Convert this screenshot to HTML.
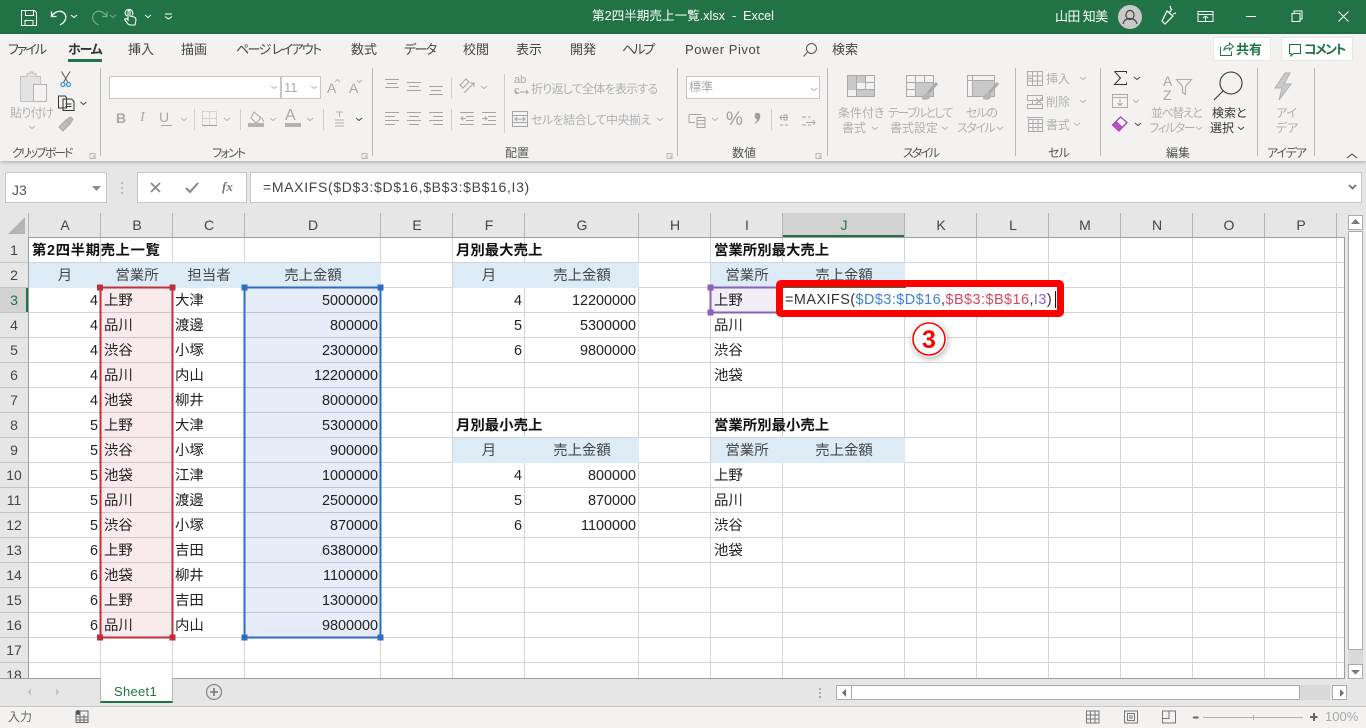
<!DOCTYPE html>
<html lang="ja"><head><meta charset="utf-8"><title>第2四半期売上一覧.xlsx - Excel</title>
<style>
html,body{margin:0;padding:0;width:1366px;height:728px;overflow:hidden;background:#e6e6e6}
body{position:relative;font-family:"Liberation Sans","Noto Sans CJK JP",sans-serif}
div,span.a{box-sizing:border-box}
.a{position:absolute}
.t{position:absolute;white-space:nowrap;font-feature-settings:"palt";line-height:16px}
.tab{font-size:13px;color:#444;top:42px}
.g{font-size:12px;color:#b1b1b1}
.lab{font-size:12px;color:#555;top:145px}
.col{position:absolute;font-size:14.4px;line-height:25px;color:#222;white-space:nowrap;margin-top:1px}
.r{text-align:right}
.hd{position:absolute;font-size:14.4px;line-height:25px;color:#444;text-align:center;white-space:nowrap;margin-top:1px}
.b{position:absolute;font-size:14.4px;line-height:25px;font-weight:bold;color:#111;white-space:nowrap;margin-top:1px}
.ch{position:absolute;font-size:14px;color:#444;text-align:center;top:213px;line-height:24px}
svg{position:absolute;overflow:visible}
</style></head><body>

<div class="a" style="left:0;top:0;width:1366px;height:34px;background:#217346"></div>
<div class="a" style="left:0;top:34px;width:1366px;height:127px;background:#f3f2f1;box-shadow:0 1px 4px rgba(0,0,0,.28)"></div>

<div class="t" style="left:592px;top:8px;font-size:12.6px;color:#fff;">第2四半期売上一覧.xlsx&nbsp; -&nbsp; Excel</div>
<div class="t" style="left:1055px;top:9px;font-size:13px;color:#fff;letter-spacing:-.6px">山田 知美</div>

<div class="t tab" style="left:8px;letter-spacing:-2px">ファイル</div>
<div class="t tab" style="left:68px;font-weight:bold;color:#333;letter-spacing:-1.2px">ホーム</div>
<div class="a" style="left:68px;top:59px;width:34px;height:3px;background:#217346"></div>
<div class="t tab" style="left:128px">挿入</div>
<div class="t tab" style="left:181px">描画</div>
<div class="t tab" style="left:236px;letter-spacing:-1.6px">ページ レイアウト</div>
<div class="t tab" style="left:351px">数式</div>
<div class="t tab" style="left:404px;letter-spacing:-1.6px">データ</div>
<div class="t tab" style="left:463px">校閲</div>
<div class="t tab" style="left:516px">表示</div>
<div class="t tab" style="left:570px">開発</div>
<div class="t tab" style="left:622px;letter-spacing:-2px">ヘルプ</div>
<div class="t tab" style="left:685px;letter-spacing:.55px">Power Pivot</div>
<div class="t tab" style="left:832px">検索</div>

<div class="a" style="left:1213px;top:37px;width:58px;height:24px;background:#fff;border:1px solid #e9e7e5;border-radius:2px"></div>
<div class="a" style="left:1281px;top:37px;width:72px;height:24px;background:#fff;border:1px solid #e9e7e5;border-radius:2px"></div>
<div class="t" style="left:1236px;top:42px;font-size:13px;font-weight:bold;color:#217346">共有</div>
<div class="t" style="left:1304px;top:42px;font-size:13px;font-weight:bold;color:#217346;letter-spacing:-1.6px">コメント</div>

<!-- ribbon boxes -->
<div class="a" style="left:109px;top:76px;width:172px;height:23px;background:#fff;border:1px solid #c6c6c6"></div>
<div class="a" style="left:281px;top:76px;width:40px;height:23px;background:#fff;border:1px solid #c6c6c6"></div>
<div class="t" style="left:284px;top:80px;font-size:13px;color:#a8a8a8">11</div>
<div class="a" style="left:686px;top:76px;width:134px;height:23px;background:#fff;border:1px solid #c6c6c6"></div>
<div class="t" style="left:689px;top:79px;font-size:12px;color:#a8a8a8">標準</div>

<div class="t g" style="left:10px;top:105px;letter-spacing:-.7px">貼り付け</div>
<div class="t g" style="left:531px;top:81px;letter-spacing:-.75px">折り返して全体を表示する</div>
<div class="t g" style="left:531px;top:112px;letter-spacing:-.5px">セルを結合して中央揃え</div>
<div class="t g" style="left:838px;top:105px">条件付き</div>
<div class="t g" style="left:842px;top:120px">書式</div>
<div class="t g" style="left:888px;top:105px;letter-spacing:-1.6px">テーブルとして</div>
<div class="t g" style="left:890px;top:120px">書式設定</div>
<div class="t g" style="left:966px;top:105px;letter-spacing:-1.2px">セルの</div>
<div class="t g" style="left:957px;top:120px;letter-spacing:-1.5px">スタイル</div>
<div class="t g" style="left:1046px;top:71px">挿入</div>
<div class="t g" style="left:1046px;top:94px">削除</div>
<div class="t g" style="left:1046px;top:117px">書式</div>
<div class="t g" style="left:1151px;top:105px;letter-spacing:-1.5px">並べ替えと</div>
<div class="t g" style="left:1149px;top:120px;letter-spacing:-1.5px">フィルター</div>
<div class="t g" style="left:1212px;top:105px;color:#333">検索と</div>
<div class="t g" style="left:1210px;top:120px;color:#333">選択</div>
<div class="t g" style="left:1276px;top:105px">アイ</div>
<div class="t g" style="left:1276px;top:120px">デア</div>
<div class="t" style="left:726px;top:109px;font-size:19px;line-height:22px;color:#9e9e9e">%</div>
<div class="t" style="left:116px;top:110px;font-size:14px;font-weight:bold;color:#a8a8a8">B</div>
<div class="t" style="left:140px;top:110px;font-size:14px;font-style:italic;font-family:'Liberation Serif',serif;color:#a8a8a8">I</div>
<div class="t" style="left:159px;top:109px;font-size:14px;color:#a8a8a8">U</div>
<div class="t" style="left:327px;top:80px;font-size:14px;color:#a8a8a8">A</div>
<div class="t" style="left:349px;top:80px;font-size:14px;color:#a8a8a8">A</div>
<div class="t" style="left:285px;top:108px;font-size:16px;color:#a8a8a8">A</div>
<div class="t" style="left:1163px;top:73px;font-size:14px;color:#a8a8a8">A</div>
<div class="t" style="left:1163px;top:87px;font-size:14px;color:#a8a8a8">Z</div>
<div class="t" style="left:514px;top:75px;font-size:11px;line-height:11px;color:#a8a8a8">ab<br>c</div>

<div class="t lab" style="left:12px;letter-spacing:-2.1px">クリップボード</div>
<div class="t lab" style="left:212px;letter-spacing:-1.7px">フォント</div>
<div class="t lab" style="left:505px">配置</div>
<div class="t lab" style="left:732px">数値</div>
<div class="t lab" style="left:903px;letter-spacing:-2px">スタイル</div>
<div class="t lab" style="left:1048px;letter-spacing:-.8px">セル</div>
<div class="t lab" style="left:1166px">編集</div>
<div class="t lab" style="left:1267px;letter-spacing:-1.2px">アイデア</div>

<!-- title + ribbon icons -->
<svg style="left:0;top:0" width="1366" height="165" fill="none" stroke-width="1">
 <!-- QAT -->
 <g stroke="#fff">
  <path d="M21.500 10.500h13l2 2v13h-15zM25.500 10.500v5h8v-5M25 25.500v-5h8v5"/>
  <path d="M51.500 11.500v5h5M52 16c3-5 9-6 12-3 3 3 2 7-1 10l-3 2" stroke-width="1.300"/>
  <path d="M71 15l3 2.500 3-2.500"/>
  <path d="M127 16c-3-2-2-6 1-6.500 4-.5 6 3 4 6M128 24l-3-4c-1-1 1-2 2-1l1 1v-8c0-2 2-2 2 0v4l4 1c2 .5 2 2 2 3l-1 5h-5z" stroke-width="1.100"/>
  <path d="M145 15l3 2.500 3-2.500M165 14h7M165 16.500l3.500 2.500 3.500-2.500"/>
  <path d="M1198 11.500h15v10h-15zM1198 14.500h15M1205.500 21v-5M1203 18l2.500-2 2.500 2"/>
  <path d="M1246 16.500h10M1292 13.500h8v8h-8zM1294 13.500v-2.500h8v8h-2M1338.500 11.500l10 10M1348.500 11.500l-10 10"/>
  <path d="M1162 21l5-10 6 5-8 8zM1172 9l-3 4M1176 13l-3 1M1170 6l1 3" stroke-width="1.200"/>
 </g>
 <g stroke="#7aa68f"><path d="M107 11.500v5h-5M106.500 16c-3-5-9-6-12-3-3 3-2 7 1 10l3 2" stroke-width="1.200"/><path d="M110 15l3 2.500 3-2.500"/></g>
 <circle cx="1130" cy="17" r="12" fill="#c9c9c9"/>
 <path d="M1130 10.500a4 4.500 0 1 1-.01 0zM1123 24c1-4 4-5.500 7-5.500s6 1.500 7 5.500" stroke="#444" stroke-width="1.200"/>
 <!-- search, share, comment -->
 <circle cx="811.500" cy="48.500" r="5" stroke="#555"/><path d="M807.500 52l-4 4.500" stroke="#555"/>
 <path d="M1220.500 47v8.500h11v-4M1224 50c0-3 3-5 5.500-5v-2l4 3.500-4 3.500v-2c-2 0-4 .5-5.500 2z" stroke="#217346"/>
 <path d="M1289.500 44.500h11v9h-7l-2.500 2.500v-2.500h-1.500z" stroke="#217346" stroke-width="1.100"/>
 <!-- group separators -->
 <path d="M100.500 68v88M372.500 68v88M677.500 68v88M827.500 68v88M1015.500 68v88M1100.500 68v88M1257.500 68v88M1314.500 68v88" stroke="#b9b9b9"/>
 <path d="M194.500 109v21M240.500 109v21M323.500 109v21M451.500 78v20M451.500 109v21M504.500 74v59M771.500 109v21" stroke="#cfcfcf"/>
 <!-- clipboard -->
 <path d="M20.500 76.500h20v25h-20z" fill="#e3e3e3" stroke="#c2c2c2"/>
 <path d="M27 76.500v-3h3v-1.500h3v1.500h3v3" fill="#e3e3e3" stroke="#c2c2c2"/>
 <path d="M33.500 84.500h13v17h-13z" fill="#f3f2f1" stroke="#b1b1b1"/>
 <path d="M61.500 71.500l6.500 11M70 71.500l-6.500 11" stroke="#555"/>
 <circle cx="63" cy="84.500" r="2" stroke="#3d95d6" stroke-width="1.300"/><circle cx="68.500" cy="84.500" r="2" stroke="#3d95d6" stroke-width="1.300"/>
 <path d="M58.500 96h7l1 2v10h-8zM63 99h8.500l2.500 2.500v9h-11zM65.500 104h6M65.500 106.500h6" stroke="#333" fill="#f3f2f1"/>
 <path d="M80.500 102l3 2.500 3-2.500" stroke="#444"/>
 <path d="M59 127l7-7 4 4-7 7zM66 120l4-3 3 2-3 5" fill="#bbb" stroke="#aaa"/>
 <g stroke="#b5b5b5"><path d="M29 126l3 2.500 3-2.500M271 86l3 2.500 3-2.500M311 86l3 2.500 3-2.500M181 118l3 2.500 3-2.500M224 118l3 2.500 3-2.500M270 118l3 2.500 3-2.500M307 118l3 2.500 3-2.500M481 86l3 2.500 3-2.500M657 118l3 2.500 3-2.500M811 88l3 2.500 3-2.500M712 118l3 2.500 3-2.500"/>
 <path d="M335 82l2.500-2.500 2.500 2.500M357 80l2.500 2.500 2.500-2.500"/>
 <path d="M872 127l3 2.500 3-2.500M942 127l3 2.500 3-2.500M997 127l3 2.500 3-2.500M1080 77l3 2.500 3-2.500M1080 100l3 2.500 3-2.500M1074 123l3 2.500 3-2.500M1133 100l3 2.500 3-2.500M1196 127l3 2.500 3-2.500"/>
 <path d="M90 153.500h5v5h-5zM92.500 155.500l3 3M362 153.500h5v5h-5zM364.500 155.500l3 3M667 153.500h5v5h-5zM669.500 155.500l3 3M816 153.500h5v5h-5zM818.500 155.500l3 3"/></g>
 <path d="M356 118l3 2.500 3-2.500M1134 77l3 2.500 3-2.500M1135 123l3 2.500 3-2.500M1238 127l3 2.500 3-2.500M1347 158l5-4 5 4" stroke="#444"/>
 <path d="M161 125.500h11" stroke="#a8a8a8"/>
 <!-- font row -->
 <path d="M202.500 111.500h14v14h-14zM209.500 111.500v14M202.500 118.500h14" stroke="#c4c4c4" stroke-dasharray="2 1"/><path d="M202 125.500h15" stroke="#a0a0a0"/>
 <path d="M254 112l7 6-5 5-5-5zM262 118l2 4" stroke="#a8a8a8"/><rect x="248" y="123" width="16" height="4" fill="#b5b1ad"/>
 <rect x="285" y="123" width="16" height="4" fill="#b5b1ad"/>
 <path d="M336 112h7M339.500 112v5M335 120h9M335 123h9M335 126h9" stroke="#b0b0b0"/>
 <!-- align -->
 <g stroke="#a5a5a5">
  <path d="M385 79.500h14M387 83.500h10M385 87.500h14"/><path d="M407 82.500h14M409 86.500h10M407 90.500h14"/><path d="M429 86.500h14M431 90.500h10M429 94.500h14"/>
  <path d="M385 112.500h14M385 116.500h10M385 120.500h14M385 124.500h10"/><path d="M407 112.500h14M409 116.500h10M407 120.500h14M409 124.500h10"/><path d="M429 112.500h14M433 116.500h10M429 120.500h14M433 124.500h10"/>
  <path d="M460 112.500h14M466 116.500h8M466 120.500h8M460 124.500h14M466 118.500h-5M463 116.500l-2 2 2 2"/><path d="M482 112.500h14M488 116.500h8M488 120.500h8M482 124.500h14M482 118.500h5M485 116.500l2 2-2 2"/>
  <path d="M464 93l10-10M470 83h4v4M460 85l6-6 3 3-6 6z"/>
  <path d="M519 93c-3 0-4-2-3-3M520 92h8l-2-2M528 92l-2 2"/>
  <path d="M512.500 111.500h15v15h-15zM512.500 115.500h15M512.500 122.500h15M515 119h10M517 117l-2 2 2 2M523 117l2 2-2 2"/>
  <path d="M689.500 114.500h12M689 114.500v8h6M697 117.500h8v10h-8zM697 120.500h8M697 124h8"/>
  <path d="M780 117.500h8M782 115l-2 2.500 2 2.500M780 125h3M785 125h3M802 125h4M808 125h3M802 117h4M808 117h3M806 122.500h9M813 120l2 2.500-2 2.500M784 115h3v5h-3z"/>
 </g>
 <path d="M756 113c3-1 5 1 4 5-1 3-3 5-6 6 2-2 3-3 3-5-3 0-3-5-1-6z" fill="#9e9e9e"/>
 <!-- styles -->
 <g stroke="#a9a9a9">
  <path d="M847.500 75.500h27v21h-27zM847.500 82.500h27M847.500 89.500h27M856.500 75.500v21M865.500 75.500v21"/>
  <path d="M906.500 75.500h27v21h-27zM906.500 82.500h27M906.500 89.500h27M915.500 75.500v21M924.500 75.500v21"/>
  <path d="M967.500 75.500h27v21h-27zM967.500 80.500h27M972.500 75.500v21"/>
 </g>
 <rect x="857" y="76" width="8" height="7" fill="#c9c9c9"/><rect x="848" y="83" width="8" height="7" fill="#c9c9c9"/><rect x="857" y="90" width="8" height="6" fill="#c9c9c9"/><rect x="865" y="90" width="9" height="6" fill="#c9c9c9"/><rect x="848" y="76" width="8" height="7" fill="#c9c9c9"/>
 <rect x="916" y="83" width="17" height="13" fill="#c9c9c9"/><rect x="973" y="81" width="21" height="15" fill="#c9c9c9"/>
 <path d="M937 83l-9 10M998 83l-9 10" stroke="#aaa" stroke-width="3"/><path d="M922 99c0-4 3-6 6-6l3 3c-1 3-5 5-9 3zM983 99c0-4 3-6 6-6l3 3c-1 3-5 5-9 3z" fill="#b5b5b5"/>
 <!-- cells -->
 <g stroke="#ababab">
  <path d="M1027.500 71.500h15v14h-15zM1027.500 76h15M1027.500 81h15M1032.500 71.500v14M1037.500 71.500v14M1033 78.500h-5"/>
  <path d="M1027.500 95.500h15v5h-15zM1027.500 104.500h15v4h-15zM1032.500 100v4M1036 98l6 6M1042 98l-6 6"/>
  <path d="M1028.500 119.500h14v12h-14zM1028.500 123.500h14M1028.500 127.500h14M1033 119.500v12M1038 119.500v12M1027 117.500h16"/>
  <path d="M1112.500 94.500h15v13h-15zM1112.500 97.500h15M1120 99v6M1117.500 103l2.500 2.500 2.500-2.500"/>
 </g>
 <path d="M1114.500 71.500h12v2M1114.500 71.500l6 6.500-6 6.500h12v-2" stroke="#333"/>
 <path d="M1112.500 125l8-8 6.500 5.500-8 8.500z" fill="#fff" stroke="#a63ab5" stroke-width="1.300"/><path d="M1112.500 125l4-4 6.500 6-4 4z" fill="#b64fc4"/>
 <path d="M1176.500 79.500h15l-6 7v8l-3-2v-6z" stroke="#ababab" stroke-width="1.100"/>
 <circle cx="1231" cy="83" r="11" stroke="#333" stroke-width="1.100"/><path d="M1223 91l-9 9" stroke="#333" stroke-width="1.100"/>
 <path d="M1285 73l-10 15h7l-3 12 12-16h-7l6-11z" fill="#c9c9c9" stroke="#b0b0b0"/>
</svg>

<!-- formula bar -->
<div class="a" style="left:5px;top:172px;width:102px;height:31px;background:#fff;border:1px solid #c6c6c6"></div>
<div class="a" style="left:137px;top:172px;width:110px;height:31px;background:#fff;border:1px solid #c6c6c6"></div>
<div class="a" style="left:250px;top:172px;width:1112px;height:31px;background:#fff;border:1px solid #c6c6c6"></div>
<div class="t" style="left:12px;top:182px;font-size:14px;color:#555">J3</div>
<div class="t" style="left:263px;top:179px;font-size:14px;color:#444;letter-spacing:.67px">=MAXIFS($D$3:$D$16,$B$3:$B$16,I3)</div>
<div class="t" style="left:222px;top:179px;font-size:13px;font-weight:bold;font-style:italic;font-family:'Liberation Serif',serif;color:#777">fx</div>
<svg style="left:0;top:165px" width="1366" height="50" fill="none">
 <path d="M92 21h9l-4.500 5z" fill="#8a8a8a"/>
 <path d="M122 17v2M122 22v2M122 27v2" stroke="#b0b0b0" stroke-width="1.500"/>
 <path d="M151 18l9 9M160 18l-9 9" stroke="#888" stroke-width="1.800"/>
 <path d="M186 23l4 4 8-9" stroke="#888" stroke-width="2"/>
 <path d="M1349 20l3.500 3.500 3.500-3.500" stroke="#707070" stroke-width="1.800"/>
</svg>

<!-- column headers -->
<div class="a" style="left:783px;top:213px;width:122px;height:24px;background:#d2d2d2"></div>
<div class="a" style="left:783px;top:235px;width:122px;height:2px;background:#217346"></div>
<div class="ch" style="left:29px;width:72px">A</div>
<div class="ch" style="left:101px;width:72px">B</div>
<div class="ch" style="left:173px;width:72px">C</div>
<div class="ch" style="left:245px;width:136px">D</div>
<div class="ch" style="left:381px;width:72px">E</div>
<div class="ch" style="left:453px;width:72px">F</div>
<div class="ch" style="left:525px;width:114px">G</div>
<div class="ch" style="left:639px;width:72px">H</div>
<div class="ch" style="left:711px;width:72px">I</div>
<div class="ch" style="left:783px;width:122px;color:#217346">J</div>
<div class="ch" style="left:905px;width:72px">K</div>
<div class="ch" style="left:977px;width:72px">L</div>
<div class="ch" style="left:1049px;width:72px">M</div>
<div class="ch" style="left:1121px;width:72px">N</div>
<div class="ch" style="left:1193px;width:72px">O</div>
<div class="ch" style="left:1265px;width:72px">P</div>

<!-- sheet background -->
<div class="a" style="left:29px;top:238px;width:1315px;height:440px;background:#fff"></div>
<div class="a" style="left:0;top:288px;width:28px;height:24px;background:#d2d2d2"></div>
<div class="a" style="left:26px;top:288px;width:2px;height:25px;background:#217346"></div>

<svg style="left:0;top:0" width="1366" height="728" fill="none">
 <path stroke="#d4d4d4" d="M100.500 238v440M172.500 238v440M244.500 238v440M380.500 238v440M452.500 238v440M524.500 238v440M638.500 238v440M710.500 238v440M782.500 238v440M904.500 238v440M976.500 238v440M1048.500 238v440M1120.500 238v440M1192.500 238v440M1264.500 238v440M1336.500 238v440
 M29 262.500h1315M29 287.500h1315M29 312.500h1315M29 337.500h1315M29 362.500h1315M29 387.500h1315M29 412.500h1315M29 437.500h1315M29 462.500h1315M29 487.500h1315M29 512.500h1315M29 537.500h1315M29 562.500h1315M29 587.500h1315M29 612.500h1315M29 637.500h1315M29 662.500h1315"/>
 <path stroke="#c4c4c4" d="M0 262.500h28M0 287.500h28M0 312.500h28M0 337.500h28M0 362.500h28M0 387.500h28M0 412.500h28M0 437.500h28M0 462.500h28M0 487.500h28M0 512.500h28M0 537.500h28M0 562.500h28M0 587.500h28M0 612.500h28M0 637.500h28M0 662.500h28"/>
 <path stroke="#b4b4b4" d="M100.500 213v24M172.500 213v24M244.500 213v24M380.500 213v24M452.500 213v24M524.500 213v24M638.500 213v24M710.500 213v24M782.500 213v24M904.500 213v24M976.500 213v24M1048.500 213v24M1120.500 213v24M1192.500 213v24M1264.500 213v24M1336.500 213v24M28.500 213v24"/>
 <path stroke="#9e9e9e" d="M28.500 237v441M28 237.500h1316.500M1344.500 237v441M0 678.500h1345"/>
 <path d="M25 217v17H8z" fill="#b5b5b5"/>
</svg>

<!-- fills -->
<div class="a" style="left:29px;top:263px;width:352px;height:25px;background:#ddebf7"></div>
<div class="a" style="left:453px;top:263px;width:186px;height:25px;background:#ddebf7"></div>
<div class="a" style="left:711px;top:263px;width:194px;height:25px;background:#ddebf7"></div>
<div class="a" style="left:453px;top:438px;width:186px;height:25px;background:#ddebf7"></div>
<div class="a" style="left:711px;top:438px;width:194px;height:25px;background:#ddebf7"></div>
<div class="a" style="left:101px;top:288px;width:71px;height:350px;background:rgba(192,48,60,.1)"></div>
<div class="a" style="left:245px;top:288px;width:135px;height:350px;background:rgba(47,108,196,.12)"></div>
<div class="a" style="left:711px;top:288px;width:72px;height:25px;background:#f1eef8"></div>

<!-- row numbers -->
<div class="a" style="left:0;top:238px;width:28px;height:440px;overflow:hidden;font-size:14px;line-height:25px;color:#444;text-align:center">1<br>2<br><span style="color:#217346">3</span><br>4<br>5<br>6<br>7<br>8<br>9<br>10<br>11<br>12<br>13<br>14<br>15<br>16<br>17<br>18</div>

<!-- cell text -->
<div class="b" style="left:32px;top:238px;letter-spacing:.6px">第2四半期売上一覧</div>
<div class="hd" style="left:29px;top:263px;width:72px">月</div>
<div class="hd" style="left:101px;top:263px;width:72px">営業所</div>
<div class="hd" style="left:173px;top:263px;width:72px">担当者</div>
<div class="hd" style="left:245px;top:263px;width:136px">売上金額</div>
<div class="col r" style="left:29px;top:288px;width:69px">4<br>4<br>4<br>4<br>4<br>5<br>5<br>5<br>5<br>5<br>6<br>6<br>6<br>6</div>
<div class="col" style="left:104px;top:288px">上野<br>品川<br>渋谷<br>品川<br>池袋<br>上野<br>渋谷<br>池袋<br>品川<br>渋谷<br>上野<br>池袋<br>上野<br>品川</div>
<div class="col" style="left:175px;top:288px">大津<br>渡邊<br>小塚<br>内山<br>柳井<br>大津<br>小塚<br>江津<br>渡邊<br>小塚<br>吉田<br>柳井<br>吉田<br>内山</div>
<div class="col r" style="left:245px;top:288px;width:133px">5000000<br>800000<br>2300000<br>12200000<br>8000000<br>5300000<br>900000<br>1000000<br>2500000<br>870000<br>6380000<br>1100000<br>1300000<br>9800000</div>

<div class="b" style="left:456px;top:238px">月別最大売上</div>
<div class="hd" style="left:453px;top:263px;width:72px">月</div>
<div class="hd" style="left:525px;top:263px;width:114px">売上金額</div>
<div class="col r" style="left:453px;top:288px;width:69px">4<br>5<br>6</div>
<div class="col r" style="left:525px;top:288px;width:111px">12200000<br>5300000<br>9800000</div>

<div class="b" style="left:456px;top:413px">月別最小売上</div>
<div class="hd" style="left:453px;top:438px;width:72px">月</div>
<div class="hd" style="left:525px;top:438px;width:114px">売上金額</div>
<div class="col r" style="left:453px;top:463px;width:69px">4<br>5<br>6</div>
<div class="col r" style="left:525px;top:463px;width:111px">800000<br>870000<br>1100000</div>

<div class="b" style="left:714px;top:238px">営業所別最大売上</div>
<div class="hd" style="left:711px;top:263px;width:72px">営業所</div>
<div class="hd" style="left:783px;top:263px;width:122px">売上金額</div>
<div class="col" style="left:714px;top:288px">上野<br>品川<br>渋谷<br>池袋</div>

<div class="b" style="left:714px;top:413px">営業所別最小売上</div>
<div class="hd" style="left:711px;top:438px;width:72px">営業所</div>
<div class="hd" style="left:783px;top:438px;width:122px">売上金額</div>
<div class="col" style="left:714px;top:463px">上野<br>品川<br>渋谷<br>池袋</div>

<!-- range highlights -->
<svg style="left:0;top:0" width="1366" height="728" fill="none">
 <rect x="100.500" y="287.500" width="72" height="350" stroke="#c0303c" stroke-width="2"/>
 <path fill="#c0303c" d="M97 284.500h6v6h-6zM169.500 284.500h6v6h-6zM97 634.500h6v6h-6zM169.500 634.500h6v6h-6z"/>
 <rect x="244.500" y="287.500" width="136" height="350" stroke="#2f6cc4" stroke-width="2"/>
 <path fill="#2f6cc4" d="M241.500 284.500h6v6h-6zM377.500 284.500h6v6h-6zM241.500 634.500h6v6h-6zM377.500 634.500h6v6h-6z"/>
 <rect x="710.500" y="287.500" width="72" height="25" stroke="#8760bd" stroke-width="2"/>
 <path fill="#8760bd" d="M707.500 284.500h6v6h-6zM707.500 309.500h6v6h-6zM779.500 309.500h3v6h-3z"/>
</svg>

<!-- red highlighted cell -->
<div class="a" style="left:776px;top:280px;width:288px;height:37px;background:#fff;border:7px solid #f00;border-radius:5px"></div>
<div class="a" style="left:783px;top:287px;width:123px;height:1px;background:#217346"></div>
<div class="t" style="left:785px;top:292px;font-size:14.4px;color:#333;font-feature-settings:normal;letter-spacing:.47px">=MAXIFS(<span style="color:#3f7fd6">$D$3:$D$16</span>,<span style="color:#d2485c">$B$3:$B$16</span>,<span style="color:#8a62c4">I3</span>)</div>
<div class="a" style="left:1055px;top:291px;width:1px;height:17px;background:#111"></div>

<svg style="left:905px;top:315px" width="50" height="50">
 <circle cx="24" cy="24" r="18" fill="#fff" style="filter:drop-shadow(1px 2px 3px rgba(0,0,0,.28))"/>
 <circle cx="24" cy="24" r="16" fill="#fff" stroke="#f00" stroke-width="1.600"/>
 <text x="24" y="33" text-anchor="middle" font-family="Liberation Sans, sans-serif" font-size="25" font-weight="bold" fill="#f00">3</text>
</svg>

<!-- vertical scrollbar -->
<div class="a" style="left:1345px;top:213px;width:21px;height:466px;background:#e6e6e6"></div>
<div class="a" style="left:1348px;top:231px;width:15px;height:433px;background:#d9d9d9"></div>
<div class="a" style="left:1348px;top:215px;width:15px;height:15px;background:#fff;border:1px solid #ababab"></div>
<div class="a" style="left:1348px;top:231px;width:15px;height:419px;background:#fff;border:1px solid #ababab"></div>
<div class="a" style="left:1348px;top:664px;width:15px;height:15px;background:#fff;border:1px solid #ababab"></div>

<!-- sheet tab bar -->
<div class="a" style="left:0;top:679px;width:1366px;height:27px;background:#e6e6e6"></div>
<div class="a" style="left:100px;top:678px;width:73px;height:25px;background:#fff;border:1px solid #b4b4b4;border-top:0;border-bottom:2px solid #217346"></div>
<div class="t" style="left:114px;top:684px;font-size:13px;color:#217346;letter-spacing:.3px">Sheet1</div>

<div class="a" style="left:851px;top:685px;width:479px;height:15px;background:#d9d9d9"></div>
<div class="a" style="left:836px;top:685px;width:16px;height:15px;background:#fff;border:1px solid #ababab"></div>
<div class="a" style="left:851px;top:685px;width:449px;height:15px;background:#fff;border:1px solid #ababab"></div>
<div class="a" style="left:1332px;top:685px;width:15px;height:15px;background:#fff;border:1px solid #ababab"></div>

<!-- status bar -->
<div class="a" style="left:0;top:706px;width:1366px;height:22px;background:#f3f2f1;border-top:1px solid #c6c6c6"></div>
<div class="t" style="left:8px;top:709px;font-size:12px;color:#666">入力</div>
<div class="t" style="left:1325px;top:709px;font-size:13px;color:#a8a8a8">100%</div>

<svg style="left:0;top:0" width="1366" height="728" fill="none">
 <path d="M1351 224l4.500-5 4.500 5zM1351 670h9l-4.500 4.500z" fill="#7a7a7a"/>
 <path d="M842 692.500l4-3.500v8zM1340 689v8l4-4z" fill="#707070"/>
 <path d="M31 688.500v7l-3.500-3.500zM56 688.500v7l3.500-3.500z" fill="#c4c4c4"/>
 <circle cx="214" cy="692" r="7.500" stroke="#888" stroke-width="1.300"/><path d="M210 692h8M214 688v8" stroke="#777" stroke-width="1.600"/>
 <path d="M820 688v2M820 692v2M820 696v2" stroke="#aaa" stroke-width="2"/>
 <circle cx="78" cy="712.500" r="2.500" fill="#555"/>
 <path d="M80 711h8v11.500h-12v-8h4zM76 717h12M76 720h12M80 714.500v8M84 714.500v8" stroke="#666"/>
 <path d="M1086.500 711h12.500v12h-12.500zM1086.500 715h12.500M1086.500 719h12.500M1090.500 711v12M1095 711v12" stroke="#777"/>
 <path d="M1124.500 711h13v12h-13zM1127.500 713.500h7v7h-7zM1129 716h4M1129 718h4" stroke="#777"/>
 <path d="M1162.500 711h13v12h-13zM1162.500 718.500h6.500v-7.500" stroke="#777"/>
 <path d="M1193 717.500h5.500" stroke="#666" stroke-width="2"/>
 <path d="M1203 717.500h100M1253.500 715v5" stroke="#b0b0b0"/>
 <path d="M1310 717h7.500M1314 713v8" stroke="#666" stroke-width="2"/>
</svg>
</body></html>
